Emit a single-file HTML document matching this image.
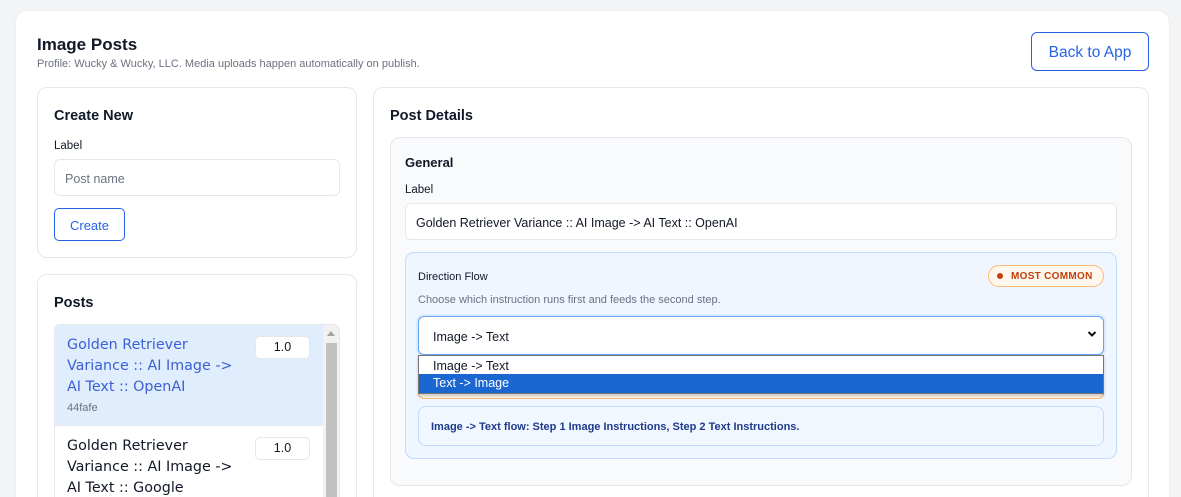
<!DOCTYPE html>
<html style="width:1181px;height:497px;overflow:hidden"><head><style>
*{box-sizing:border-box;margin:0;padding:0}
body{width:1181px;height:497px;overflow:hidden;background:#f3f4f6;font-family:"Liberation Sans",sans-serif;color:#111827;position:relative}
.abs{position:absolute}
.card{background:#fff;border:1px solid #e5e7eb;border-radius:10px}
</style></head><body>
<div class="abs" style="left:16px;top:11px;width:1153px;height:500px;background:#fff;border-radius:12px;box-shadow:0 1px 3px rgba(0,0,0,.06)"></div>
<div class="abs" style="left:37px;top:35px;font-size:17px;font-weight:bold">Image Posts</div>
<div class="abs" style="left:37px;top:58px;font-size:11px;color:#6b7280">Profile: Wucky &amp; Wucky, LLC. Media uploads happen automatically on publish.</div>
<div class="abs" style="left:1031px;top:32px;width:118px;height:39px;border:1px solid #2563eb;border-radius:6px;color:#2563eb;font-size:15.5px;line-height:39px;text-align:center">Back to App</div>

<div class="abs card" style="left:37px;top:87px;width:320px;height:171px"></div>
<div class="abs" style="left:54px;top:108px;font-size:14.5px;font-weight:bold">Create New</div>
<div class="abs" style="left:54px;top:140px;font-size:11.5px">Label</div>
<div class="abs" style="left:54px;top:159px;width:286px;height:37px;border:1px solid #e5e7eb;border-radius:6px;font-size:12.5px;color:#6b7280;padding:12px 0 0 10px">Post name</div>
<div class="abs" style="left:54px;top:208px;width:71px;height:33px;border:1px solid #2563eb;border-radius:5px;color:#2563eb;font-size:13px;line-height:33px;text-align:center">Create</div>

<div class="abs card" style="left:37px;top:274px;width:320px;height:240px"></div>
<div class="abs" style="left:54px;top:295px;font-size:14.5px;font-weight:bold">Posts</div>
<div class="abs" style="left:54px;top:324px;width:286px;height:190px;border:1px solid #e5e7eb;border-radius:6px;overflow:hidden">
  <div style="position:absolute;left:0;top:0;width:268px;height:101px;background:#e0edfc;border-bottom:1px solid #e5e7eb"></div>
  <div style="position:absolute;left:12px;top:10px;width:180px;font-family:'DejaVu Sans',sans-serif;font-size:14.3px;line-height:21px;color:#3b5fd6">Golden Retriever Variance :: AI Image -&gt; AI Text :: OpenAI</div>
  <div style="position:absolute;left:12px;top:77px;font-size:11px;color:#6b7280">44fafe</div>
  <div style="position:absolute;left:200px;top:11px;width:55px;height:23px;background:#fff;border:1px solid #e5e7eb;border-radius:5px;font-size:12.5px;text-align:center;line-height:21px">1.0</div>
  <div style="position:absolute;left:12px;top:111px;width:180px;font-family:'DejaVu Sans',sans-serif;font-size:14.3px;line-height:21px;color:#111827">Golden Retriever Variance :: AI Image -&gt; AI Text :: Google</div>
  <div style="position:absolute;left:200px;top:112px;width:55px;height:23px;background:#fff;border:1px solid #e5e7eb;border-radius:5px;font-size:12.5px;text-align:center;line-height:21px">1.0</div>
  <div style="position:absolute;left:268px;top:0;width:17px;height:190px;background:#f1f1f1"></div>
  <div style="position:absolute;left:271px;top:18px;width:11px;height:172px;background:#c1c1c1"></div>
  <div style="position:absolute;left:272px;top:6px;width:0;height:0;border-left:4px solid transparent;border-right:4px solid transparent;border-bottom:5px solid #a3a3a3"></div>
</div>

<div class="abs card" style="left:373px;top:87px;width:776px;height:430px"></div>
<div class="abs" style="left:390px;top:108px;font-size:14.5px;font-weight:bold">Post Details</div>
<div class="abs" style="left:390px;top:137px;width:742px;height:349px;background:#f8fafc;border:1px solid #e5e7eb;border-radius:10px"></div>
<div class="abs" style="left:405px;top:155px;font-size:13px;font-weight:bold">General</div>
<div class="abs" style="left:405px;top:184px;font-size:11.5px">Label</div>
<div class="abs" style="left:405px;top:203px;width:712px;height:37px;background:#fff;border:1px solid #e5e7eb;border-radius:6px;font-size:12.5px;padding:12px 0 0 10px">Golden Retriever Variance :: AI Image -&gt; AI Text :: OpenAI</div>

<div class="abs" style="left:405px;top:252px;width:712px;height:207px;background:#eff6ff;border:1px solid #bfdbfe;border-radius:9px"></div>
<div class="abs" style="left:418px;top:271px;font-size:11px">Direction Flow</div>
<div class="abs" style="left:418px;top:294px;font-size:11px;color:#6b7280">Choose which instruction runs first and feeds the second step.</div>
<div class="abs" style="left:988px;top:265px;width:116px;height:22px;background:#fff7ed;border:1px solid #fdba74;border-radius:11px;font-size:10px;font-weight:bold;color:#c2410c;line-height:21px;padding-left:22px;letter-spacing:.3px">MOST COMMON</div>
<div class="abs" style="left:997px;top:273px;width:6px;height:6px;border-radius:50%;background:#c2410c"></div>
<div class="abs" style="left:418px;top:383px;width:686px;height:16px;border:1px solid #fdba74;border-radius:6px;background:#fff7ed"></div>
<div class="abs" style="left:418px;top:316px;width:686px;height:39px;background:#fff;border:1px solid #60a5fa;border-radius:6px;box-shadow:0 0 0 2px #dbeafe;font-size:12.5px;padding:13px 0 0 14px">Image -&gt; Text</div>
<svg class="abs" style="left:1087px;top:330px" width="10" height="8"><path d="M1.5 2 L5 5.5 L8.5 2" stroke="#111" stroke-width="2" fill="none"/></svg>
<div class="abs" style="left:418px;top:355px;width:686px;height:39px;background:#fff;border:1px solid #767676;box-shadow:0 2px 3px rgba(0,0,0,.2);font-size:12.5px">
  <div style="height:18px;line-height:20px;padding-left:14px">Image -&gt; Text</div>
  <div style="height:19px;line-height:19px;padding-left:14px;background:#1a67d2;color:#fff">Text -&gt; Image</div>
</div>
<div class="abs" style="left:418px;top:406px;width:686px;height:40px;background:#f1f7ff;border:1px solid #bfdbfe;border-radius:8px;font-size:11px;font-weight:bold;color:#1e3a8a;padding:14px 0 0 12px">Image -&gt; Text flow: Step 1 Image Instructions, Step 2 Text Instructions.</div>
</body></html>
